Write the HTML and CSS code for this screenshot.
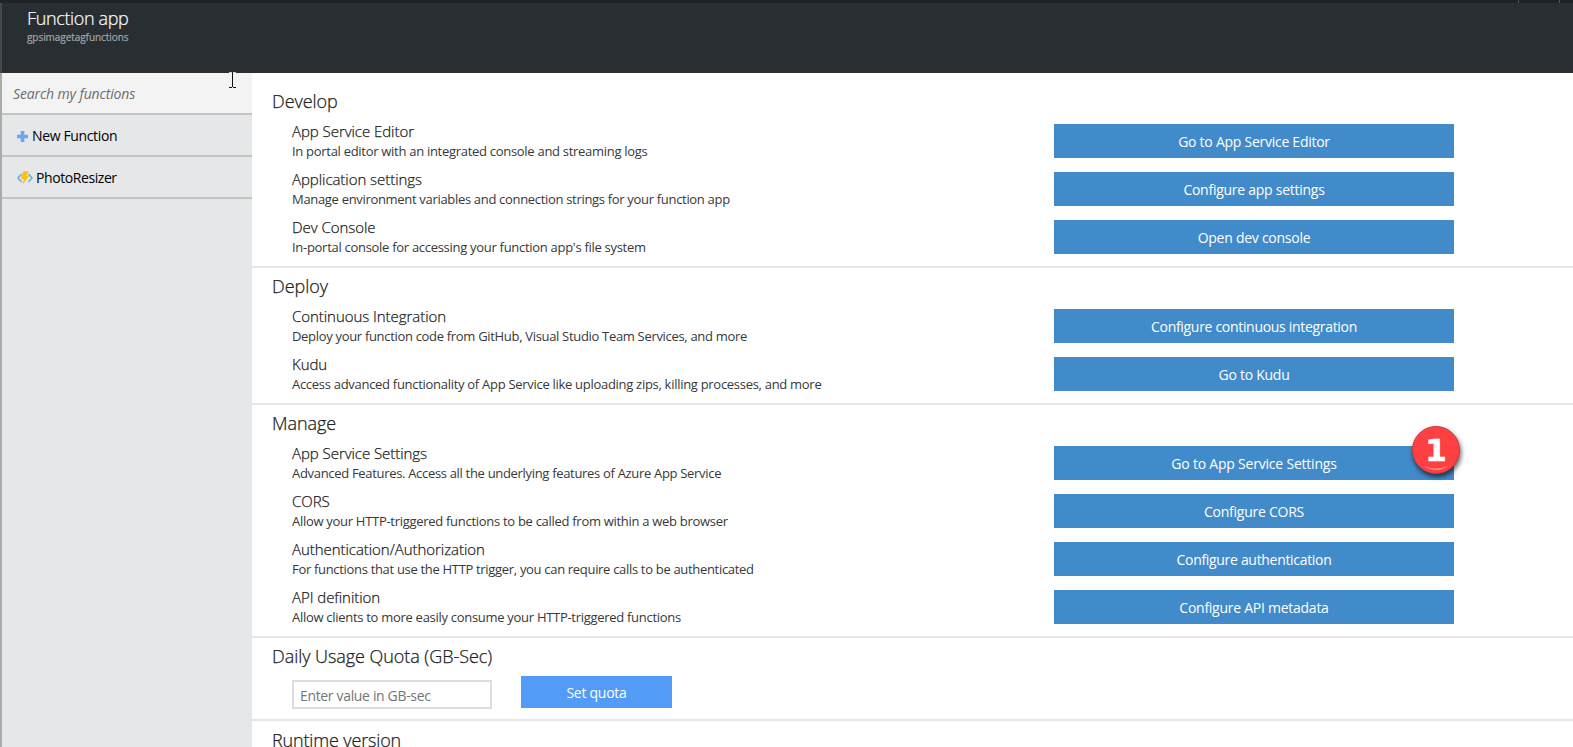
FILE: index.html
```html
<!DOCTYPE html>
<html lang="en">
<head>
<meta charset="utf-8">
<title>Function app</title>
<link rel="stylesheet" href="styles.css">
</head>
<body>
<div class="topbar"><i class="tick"></i><i class="tick"></i></div>
<header class="header">
  <h1 class="app-title">Function app</h1>
  <div class="app-name">gpsimagetagfunctions</div>
</header>
<div class="shell">
  <nav class="sidebar">
    <div class="search">Search my functions</div>
    <div class="nav-item">
      <svg class="plus" width="11" height="11" viewBox="0 0 11 11"><path d="M3.700 0h3.600v3.700H11v3.600H7.300V11H3.700V7.300H0V3.700h3.700z" fill="#68a9f5"/></svg>
      <span class="nav-label">New Function</span>
    </div>
    <div class="nav-item">
      <svg class="bolt" width="16" height="14" viewBox="0 0 16 14"><path d="M4.600 3L1 7l3.600 4M11.400 3L15 7l-3.600 4" fill="none" stroke="#62b0dc" stroke-width="1.500"/><path d="M6.300 .3h5L9.400 4.800h3L5.400 13.700l1.500-5.500H3.700z" fill="#fdbf12"/></svg>
      <span class="nav-label tight">PhotoResizer</span>
    </div>
  </nav>
  <main class="content">
    <section class="section">
      <h2 class="section-title">Develop</h2>
      <div class="items">
        <div class="item"><div class="info"><h3 class="name">App Service Editor</h3><p class="desc">In portal editor with an integrated console and streaming logs</p></div><button class="btn">Go to App Service Editor</button></div>
        <div class="item"><div class="info"><h3 class="name">Application settings</h3><p class="desc desc-wide">Manage environment variables and connection strings for your function app</p></div><button class="btn">Configure app settings</button></div>
        <div class="item"><div class="info"><h3 class="name">Dev Console</h3><p class="desc">In-portal console for accessing your function app's file system</p></div><button class="btn">Open dev console</button></div>
      </div>
    </section>
    <section class="section">
      <h2 class="section-title">Deploy</h2>
      <div class="items">
        <div class="item"><div class="info"><h3 class="name">Continuous Integration</h3><p class="desc desc-wide">Deploy your function code from GitHub, Visual Studio Team Services, and more</p></div><button class="btn btn-long">Configure continuous integration</button></div>
        <div class="item"><div class="info"><h3 class="name">Kudu</h3><p class="desc">Access advanced functionality of App Service like uploading zips, killing processes, and more</p></div><button class="btn">Go to Kudu</button></div>
      </div>
    </section>
    <section class="section">
      <h2 class="section-title">Manage</h2>
      <div class="items">
        <div class="item"><div class="info"><h3 class="name">App Service Settings</h3><p class="desc desc-wide">Advanced Features. Access all the underlying features of Azure App Service</p></div><button class="btn btn-marked">Go to App Service Settings<span class="badge">1<svg class="shine" width="48" height="48" viewBox="0 0 48 48"><path d="M12 40Q24 48 36 40Q24 45 12 40z" fill="#ff9292"/></svg></span></button></div>
        <div class="item"><div class="info"><h3 class="name">CORS</h3><p class="desc">Allow your HTTP-triggered functions to be called from within a web browser</p></div><button class="btn">Configure CORS</button></div>
        <div class="item"><div class="info"><h3 class="name">Authentication/Authorization</h3><p class="desc desc-wide">For functions that use the HTTP trigger, you can require calls to be authenticated</p></div><button class="btn btn-long">Configure authentication</button></div>
        <div class="item"><div class="info"><h3 class="name">API definition</h3><p class="desc">Allow clients to more easily consume your HTTP-triggered functions</p></div><button class="btn">Configure API metadata</button></div>
      </div>
    </section>
    <section class="section">
      <h2 class="section-title">Daily Usage Quota (GB-Sec)</h2>
      <div class="quota">
        <input class="quota-input" type="text" placeholder="Enter value in GB-sec">
        <button class="quota-btn">Set quota</button>
      </div>
    </section>
    <section class="section section-last">
      <h2 class="section-title">Runtime version</h2>
    </section>
  </main>
</div>
<svg class="cursor" width="7" height="16" viewBox="0 0 7 16"><path d="M3.500 1v14M0 15.500h3M4 15.500h3" stroke="#111" fill="none"/><path d="M0 .5h3M4 .5h3" stroke="#cfd1d2"/></svg>
</body>
</html>
```
FILE: styles.css
```css
* { box-sizing: border-box; }
body {
  margin: 0;
  height: 747px;
  overflow: hidden;
  display: flex;
  flex-direction: column;
  position: relative;
  background: #fff;
  color: #383838;
  font-family: "Open Sans", "Noto Sans", sans-serif;
}
h1, h2, h3, p { margin: 0; font-weight: 400; }
button { font-family: inherit; border: 0; padding: 0; }

.topbar {
  flex: none;
  height: 3px;
  background: #1f2327;
  display: flex;
  justify-content: flex-end;
  gap: 40px;
  padding-right: 13px;
}
.tick { width: 1px; height: 3px; background: #54585c; }
.header {
  flex: none;
  height: 70px;
  background: #292e32;
  border-left: 2px solid #44484b;
  padding: 3px 0 0 25px;
}
.app-title {
  font-size: 18px;
  font-weight: 300;
  line-height: 24px;
  letter-spacing: -0.36px;
  color: #fff;
  -webkit-text-stroke: 0.2px #fff;
}
.app-name {
  font-size: 10px;
  line-height: 14px;
  letter-spacing: -0.06px;
  color: #a5a7a9;
  -webkit-text-stroke: 0.2px #a5a7a9;
}

.shell { flex: 1; display: flex; min-height: 0; }
.sidebar {
  flex: none;
  width: 252px;
  background: #e6e7e9;
  border-left: 2px solid #ababab;
}
.search {
  height: 42px;
  padding-left: 11px;
  background: #f3f3f3;
  border-bottom: 2px solid #c3c4c4;
  font-size: 14px;
  font-style: italic;
  line-height: 42px;
  letter-spacing: -0.14px;
  color: #6d6d6d;
}
.nav-item {
  height: 42px;
  display: flex;
  align-items: center;
  padding: 2px 0 0 15px;
  border-bottom: 2px solid #c3c4c4;
}
.plus { margin-right: 4px; }
.bolt { margin-right: 3px; }
.nav-label {
  font-size: 14px;
  line-height: 20px;
  letter-spacing: -0.36px;
  color: #000;
}
.tight { letter-spacing: -0.42px; }

.content { flex: 1; padding-top: 10px; overflow: hidden; }
.section { padding: 5px 0 9px 20px; border-bottom: 2px solid #e6e6e6; }
.section-last { padding: 6px 0 0 20px; border: 0; height: 26px; }
.section-title {
  margin-bottom: 7px;
  font-size: 18px;
  font-weight: 300;
  line-height: 26px;
  letter-spacing: -0.05px;
  color: #222;
  -webkit-text-stroke: 0.25px #222;
}
.section-last .section-title { margin: 0; line-height: 26px; letter-spacing: -0.15px; }
.items { display: flex; flex-direction: column; gap: 8px; padding-left: 20px; }
.item { height: 40px; display: flex; }
.info { width: 762px; }
.name {
  font-size: 15px;
  font-weight: 300;
  line-height: 20px;
  letter-spacing: -0.05px;
  color: #222;
  -webkit-text-stroke: 0.25px #222;
}
.desc { font-size: 13px; line-height: 20px; letter-spacing: -0.29px; white-space: nowrap; }
.desc-wide { letter-spacing: -0.315px; }
.btn {
  width: 400px;
  height: 34px;
  margin-top: 3px;
  background: #428bca;
  color: #fff;
  font-size: 14px;
  letter-spacing: -0.26px;
}
.btn-long { letter-spacing: -0.31px; }
.btn-marked { position: relative; letter-spacing: -0.21px; }
.badge {
  position: absolute;
  left: 358px;
  top: -20px;
  width: 48px;
  height: 48px;
  border-radius: 50%;
  background: #ff4043;
  border: 1px solid #c93a40;
  box-shadow: 1px 3px 5px rgba(0, 0, 0, .65);
  font-family: "DejaVu Sans", sans-serif;
  font-size: 31px;
  font-weight: 700;
  line-height: 47px;
  letter-spacing: 0;
  -webkit-text-stroke: 0.6px #fff;
}
.shine { position: absolute; left: -1px; top: -1px; }

.quota { display: flex; align-items: flex-start; padding-left: 20px; height: 34px; }
.quota-input {
  width: 200px;
  height: 29px;
  margin: 4px 29px 0 0;
  padding: 2px 6px 0;
  border: 2px solid #ddd;
  font: 14px "Open Sans", sans-serif;
  letter-spacing: -0.34px;
}
.quota-input::placeholder { color: #757575; }
.quota-btn {
  width: 151px;
  height: 32px;
  background: #529bf6;
  color: #fff;
  font-size: 14px;
  letter-spacing: -0.26px;
}
.cursor { position: absolute; left: 229px; top: 72px; }
```
